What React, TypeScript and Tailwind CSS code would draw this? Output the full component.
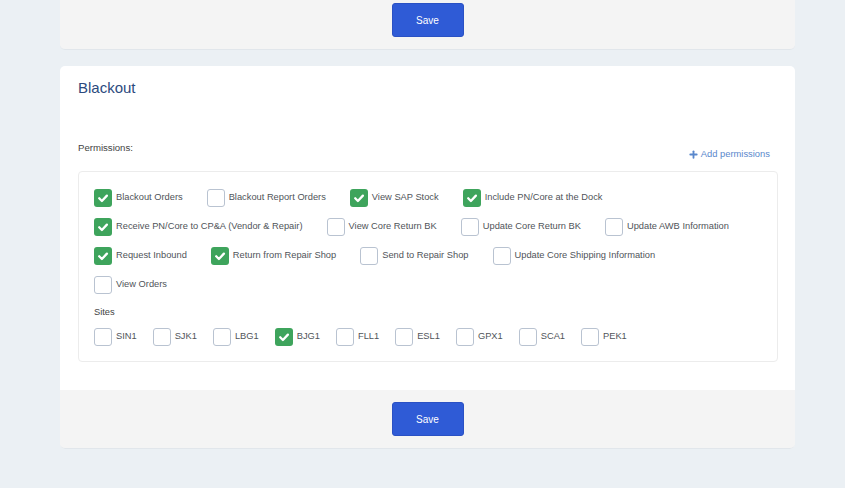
import { Plus } from 'lucide-react'

type Item = { label: string; checked?: boolean }

const permissionRows: Item[][] = [
  [
    { label: 'Blackout Orders', checked: true },
    { label: 'Blackout Report Orders' },
    { label: 'View SAP Stock', checked: true },
    { label: 'Include PN/Core at the Dock', checked: true },
  ],
  [
    { label: 'Receive PN/Core to CP&A (Vendor & Repair)', checked: true },
    { label: 'View Core Return BK' },
    { label: 'Update Core Return BK' },
    { label: 'Update AWB Information' },
  ],
  [
    { label: 'Request Inbound', checked: true },
    { label: 'Return from Repair Shop', checked: true },
    { label: 'Send to Repair Shop' },
    { label: 'Update Core Shipping Information' },
  ],
  [{ label: 'View Orders' }],
]

const sites: Item[] = [
  { label: 'SIN1' },
  { label: 'SJK1' },
  { label: 'LBG1' },
  { label: 'BJG1', checked: true },
  { label: 'FLL1' },
  { label: 'ESL1' },
  { label: 'GPX1' },
  { label: 'SCA1' },
  { label: 'PEK1' },
]

function Checkbox({ item }: { item: Item }) {
  return (
    <label className="flex items-center gap-[4px] cursor-pointer">
      {item.checked ? (
        <span className="w-[18px] h-[18px] rounded-[3px] bg-[#3ea45c] flex items-center justify-center">
          <svg width="18" height="18" viewBox="0 0 18 18" fill="none">
            <path d="M5.2 9.3 L7.9 12 L12.9 6.6" stroke="white" strokeWidth="2.3" strokeLinecap="round" strokeLinejoin="round" />
          </svg>
        </span>
      ) : (
        <span className="w-[18px] h-[18px] rounded-[3px] border border-[#b9c3d1] bg-white" />
      )}
      <span className="text-[9.3px] text-[#505459]">{item.label}</span>
    </label>
  )
}

function SaveFooter() {
  return (
    <div className="bg-[#f4f4f4] h-[59px] pt-[12px] flex justify-center rounded-b-[5px] border-b border-[#e1e6eb]">
      <button className="w-[72px] h-[34px] rounded-[3px] bg-[#2f5bd6] border border-[#2a51c4] text-white text-[10px] font-medium">
        Save
      </button>
    </div>
  )
}

export default function App() {
  return (
    <div
      className="min-h-[488px] bg-[#ebf0f4] overflow-hidden"
      style={{ fontFamily: '"Liberation Sans", Arial, sans-serif' }}
    >
      <div className="ml-[60px] w-[735px]">
        {/* previous card, only its footer is visible */}
        <div className="mt-[-9px]">
          <SaveFooter />
        </div>

        <div className="mt-[16px] rounded-[5px] bg-white">
          <div className="pt-[13px] pl-[18px] pr-[17px] pb-[28px]">
            <h2 className="text-[15px] leading-[18px] text-[#2c4a7e]">Blackout</h2>
            <div className="mt-[45px] flex justify-between items-start pr-[8px]">
              <div className="text-[9.6px] leading-[12px] text-[#444]">Permissions:</div>
              <button className="mt-[6px] flex items-center gap-[2px] text-[9.4px] leading-[12px] text-[#5a88cc]">
                <Plus className="w-[11px] h-[11px]" strokeWidth={4} />
                Add permissions
              </button>
            </div>
            <div className="mt-[11px] border border-[#ececec] rounded-[4px] pt-[17px] pb-[15px] pl-[15px]">
              <div className="flex flex-col gap-[11px]">
                {permissionRows.map((row, i) => (
                  <div key={i} className="flex gap-x-[24px]">
                    {row.map(item => (
                      <Checkbox key={item.label} item={item} />
                    ))}
                  </div>
                ))}
              </div>
              <div className="mt-[12px] text-[9.3px] leading-[12px] text-[#444]">Sites</div>
              <div className="mt-[10px] flex gap-x-[16px]">
                {sites.map(item => (
                  <Checkbox key={item.label} item={item} />
                ))}
              </div>
            </div>
          </div>
          <SaveFooter />
        </div>
      </div>
    </div>
  )
}
